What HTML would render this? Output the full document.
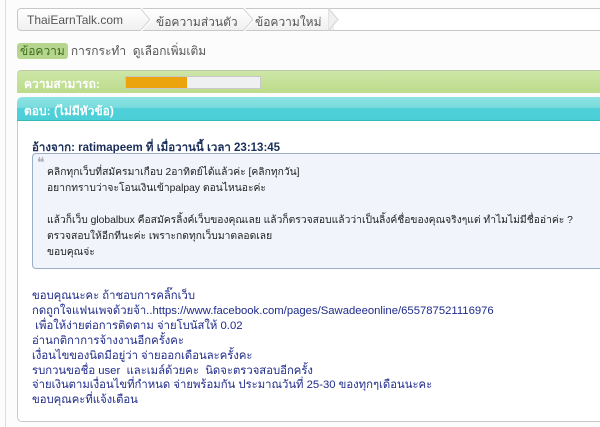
<!DOCTYPE html>
<html><head><meta charset="utf-8"><style>
*{margin:0;padding:0;box-sizing:border-box}
body{width:600px;height:427px;background:#fcfcfc;font-family:Tahoma,"Liberation Sans",sans-serif;font-size:11px;position:relative;overflow:hidden}
.vl{position:absolute;left:5px;top:0;width:1px;height:427px;background:#d8dde4}
.bc{position:absolute;left:17px;top:8px;width:600px;height:23px;border:1px solid #c8c8c8;border-radius:4px 0 0 4px;background:linear-gradient(#fff,#f0f0f0);}
.bc span{position:absolute;top:4px;font-size:12px;color:#555}
.bc .w{position:absolute;left:316px;top:0;width:300px;height:21px;background:#fff}
.bc .ch{position:absolute;top:-1px;width:12px;height:23px}
.tabs{position:absolute;left:17px;top:42px;font-size:12px;color:#555}
.tabs b{font-weight:normal;background:#b6d68f;color:#3e6d1a;border-radius:3px;padding:1px 3px;margin-right:3px}
.g{position:absolute;left:17px;top:70px;width:600px;height:23px;background:linear-gradient(#cde6a6,#bcdb8b);border-top:1px solid #bcc8a8;border-radius:4px 0 0 0}
.g span{position:absolute;left:7px;top:4px;color:#fff;font-weight:bold;font-size:12px}
.bar{position:absolute;left:108px;top:5px;width:136px;height:13px;background:#eef0f2;border:1px solid #c8c8c8}
.bar i{display:block;width:61px;height:11px;background:#eba40e}
.c{position:absolute;left:17px;top:97px;width:600px;height:24px;background:linear-gradient(#8de3e3 0,#7adcdd 45%,#4fd0d8 50%,#4dcfd7);border-radius:5px 0 0 0;border-bottom:1px solid #3bb}
.c span{position:absolute;left:7px;top:5px;color:#fff;font-weight:bold;font-size:12px}
.box{position:absolute;left:17px;top:121px;width:600px;height:301px;border-left:1px solid #c8c8c8;border-bottom:1px solid #c8c8c8;border-radius:0 0 0 5px;background:#fff}
.q{position:absolute;left:32px;top:139px;font-weight:bold;color:#1a2e5a;font-size:11.5px}
.qb{position:absolute;left:32px;top:153px;width:600px;height:116px;border:1px solid #9bb0c8;border-radius:4px;background:#f1f4fa;color:#222;line-height:16px;font-size:10.3px}
.qb .m{position:absolute;left:4px;top:0;color:#aab;font-size:14px}
.qb div.t{position:absolute;left:14px;top:11px;white-space:nowrap}
.body{position:absolute;left:32px;top:289px;color:#1e2a8a;line-height:14.9px;white-space:pre;font-size:11.3px}
</style></head><body>
<div class="vl"></div>
<div class="bc"><div class="w"></div>
<svg class="ch" style="left:122px" viewBox="0 0 12 23"><path d="M1 0L11 11.5L1 23" fill="none" stroke="#fff" stroke-width="2"/><path d="M0 0L10 11.5L0 23" fill="none" stroke="#d4d4d4"/></svg>
<svg class="ch" style="left:225px" viewBox="0 0 12 23"><path d="M1 0L11 11.5L1 23" fill="none" stroke="#fff" stroke-width="2"/><path d="M0 0L10 11.5L0 23" fill="none" stroke="#d4d4d4"/></svg>
<svg class="ch" style="left:310px" viewBox="0 0 12 23"><path d="M0 0L10 11.5L0 23Z" fill="#f0f0f0" stroke="#d4d4d4"/></svg>
<span style="left:9px">ThaiEarnTalk.com</span><span style="left:138px">ข้อความส่วนตัว</span><span style="left:237px">ข้อความใหม่</span></div>
<div class="tabs"><b>ข้อความ</b>การกระทำ&nbsp;&nbsp;ดูเลือกเพิ่มเติม</div>
<div class="g"><span>ความสามารถ:</span><div class="bar"><i></i></div></div>
<div class="c"><span>ตอบ: (ไม่มีหัวข้อ)</span></div>
<div class="box"></div>
<div class="q">อ้างจาก: ratimapeem ที่ เมื่อวานนี้ เวลา 23:13:45</div>
<div class="qb"><span class="m">❝</span><div class="t">คลิกทุกเว็บที่สมัครมาเกือบ 2อาทิตย์ได้แล้วค่ะ [คลิกทุกวัน]<br>อยากทราบว่าจะโอนเงินเข้าpalpay ตอนไหนอะค่ะ<br><br>แล้วก็เว็บ globalbux คือสมัครลิ้งค์เว็บของคุณเลย แล้วก็ตรวจสอบแล้วว่าเป็นลิ้งค์ชื่อของคุณจริงๆแต่ ทำไมไม่มีชื่ออ่าค่ะ ?<br>ตรวจสอบให้อีกทีนะค่ะ เพราะกดทุกเว็บมาตลอดเลย<br>ขอบคุณจ่ะ</div></div>
<div class="body">ขอบคุณนะคะ ถ้าชอบการคลิ๊กเว็บ
กดถูกใจแฟนเพจด้วยจ้า..https://www.facebook.com/pages/Sawadeeonline/655787521116976
 เพื่อให้ง่ายต่อการติดตาม จ่ายโบนัสให้ 0.02
อ่านกติกาการจ้างงานอีกครั้งคะ
เงื่อนไขของนิดมีอยู่ว่า จ่ายออกเดือนละครั้งคะ
รบกวนขอชื่อ user  และเมล์ด้วยคะ  นิดจะตรวจสอบอีกครั้ง
จ่ายเงินตามเงื่อนไขที่กำหนด จ่ายพร้อมกัน ประมาณวันที่ 25-30 ของทุกๆเดือนนะคะ
ขอบคุณคะที่แจ้งเตือน</div>
</body></html>
